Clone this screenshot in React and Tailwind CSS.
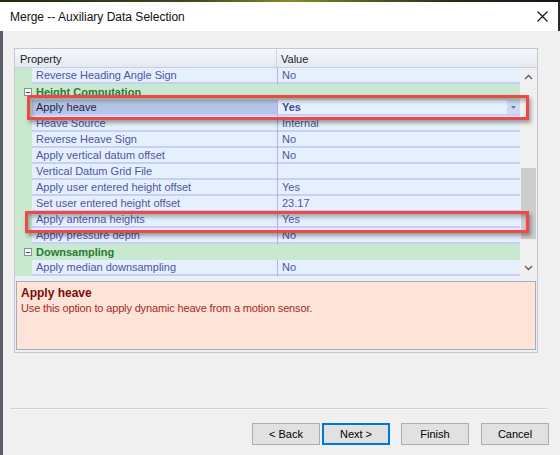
import React from "react";

const rows = [
  { name: "Reverse Heading Angle Sign", value: "No" },
  { cat: "Height Computation" },
  { name: "Apply heave", value: "Yes", selected: true },
  { name: "Heave Source", value: "Internal" },
  { name: "Reverse Heave Sign", value: "No" },
  { name: "Apply vertical datum offset", value: "No" },
  { name: "Vertical Datum Grid File", value: "" },
  { name: "Apply user entered height offset", value: "Yes" },
  { name: "Set user entered height offset", value: "23.17" },
  { name: "Apply antenna heights", value: "Yes" },
  { name: "Apply pressure depth", value: "No" },
  { cat: "Downsampling" },
  { name: "Apply median downsampling", value: "No" },
];

function MinusBox() {
  return (
    <div className="w-[8px] h-[8px] border border-[#8a9098] bg-[#f4f6f8] flex items-center justify-center">
      <div className="w-[4px] h-px bg-[#404850]" />
    </div>
  );
}

function CatRow({ label }) {
  return (
    <div className="flex h-[16px] items-center bg-[#c8e9cf]">
      <div className="w-[21px] flex justify-end pr-[4px] pl-[5px]">
        <MinusBox />
      </div>
      <div className="font-bold text-[#2b7a36] leading-[17px]">{label}</div>
    </div>
  );
}

function PropRow({ name, value, selected }) {
  return (
    <div className="flex h-[16px]">
      <div className="w-[17px] bg-[#c8e9cf]" />
      <div
        className={
          selected
            ? "w-[245px] border-b-2 border-[#c9cdf7] pl-[4px] leading-[15px] bg-[#b5c4e8] text-[#1d1f45]"
            : "w-[245px] border-b-2 border-[#c9cdf7] pl-[4px] leading-[15px] bg-[#e5f0fd] text-[#4e55a6]"
        }
      >
        {name}
      </div>
      <div className="w-px bg-[#aeb3f0]" />
      {selected ? (
        <div className="flex-1 flex border-b-2 border-[#c9cdf7] bg-[#e7f1fd]">
          <div className="flex-1 pl-[4px] leading-[15px] font-bold text-[#3d4aa0]">{value}</div>
          <div className="w-[13px] bg-[#cddaf3] flex items-center justify-center">
            <svg width="5" height="3" viewBox="0 0 5 3">
              <path d="M0 0 H5 L2.5 3 Z" fill="#6a78b0" />
            </svg>
          </div>
        </div>
      ) : (
        <div className="flex-1 border-b-2 border-[#c9cdf7] pl-[4px] leading-[15px] bg-[#e5f0fd] text-[#4e55a6]">
          {value}
        </div>
      )}
    </div>
  );
}

function Btn({ children, primary }) {
  return (
    <div
      className={
        primary
          ? "w-[68px] h-[22px] bg-[#e1e1e1] border-2 border-[#0078d7] flex items-center justify-center text-[11px] text-black"
          : "w-[68px] h-[22px] bg-[#e1e1e1] border border-[#adadad] flex items-center justify-center text-[11px] text-black"
      }
    >
      {children}
    </div>
  );
}

export default function App() {
  return (
    <div className="w-[560px] h-[455px] overflow-hidden relative bg-[#f0f0f0] font-['Liberation_Sans',Arial,sans-serif] text-[11px]">
      <div className="h-[2px] bg-[linear-gradient(90deg,#1e2a14,#3c4c1c_35%,#8c8a24_52%,#5a6a20_62%,#263018_80%,#141414)]" />
      <div className="h-[29px] bg-white flex items-center justify-between pl-[10px] pr-[10px] border-r-2 border-[#2a2a2a]">
        <div className="text-[12px] text-[#111] pt-px">Merge -- Auxiliary Data Selection</div>
        <svg width="11" height="11" viewBox="0 0 11 11">
          <path d="M0.5 0.5 L10.5 10.5 M10.5 0.5 L0.5 10.5" stroke="#111" strokeWidth="1.1" />
        </svg>
      </div>
      <div className="h-[424px] border-l-[3px] border-[#5b6068] flex flex-col">
        <div className="ml-[11px] mt-[17px] w-[524px] h-[305px] border border-[#c4c8d0] bg-[#eceff4] flex flex-col">
          <div className="h-[19px] flex bg-[linear-gradient(180deg,#f6f8fc,#e3e9f2)] border-b border-[#c9d0dc] text-[#1b1b1b]">
            <div className="w-[262px] pl-[5px] leading-[20px] border-r border-[#cfd4de]">Property</div>
            <div className="flex-1 pl-[4px] leading-[20px]">Value</div>
          </div>
          <div className="flex h-[208px]">
            <div className="w-[505px] flex flex-col">
              {rows.map((r, i) =>
                r.cat ? <CatRow key={i} label={r.cat} /> : <PropRow key={i} {...r} />
              )}
            </div>
            <div className="w-[17px] bg-[#f0f0f0] flex flex-col">
              <div className="h-[17px] flex items-center justify-center">
                <svg width="9" height="6" viewBox="0 0 9 6">
                  <path d="M1 5 L4.5 1.5 L8 5" stroke="#606060" strokeWidth="1.4" fill="none" />
                </svg>
              </div>
              <div className="flex-1">
                <div className="mt-[83px] ml-[1px] w-[15px] h-[71px] bg-[#cdcdcd]" />
              </div>
              <div className="h-[17px] flex items-center justify-center">
                <svg width="9" height="6" viewBox="0 0 9 6">
                  <path d="M1 1 L4.5 4.5 L8 1" stroke="#606060" strokeWidth="1.4" fill="none" />
                </svg>
              </div>
            </div>
          </div>
          <div className="mt-[5px] mx-px h-[69px] border border-[#a9adb5] bg-[#fee4d8] px-[4px] pt-[4px]">
            <div className="text-[12px] font-bold text-[#7b0c0c] leading-[15px]">Apply heave</div>
            <div className="text-[#a3282a] leading-[14px] tracking-[-0.15px]">
              Use this option to apply dynamic heave from a motion sensor.
            </div>
          </div>
        </div>
        <div className="mt-[55px] ml-[7px] w-[538px] h-[2px] border-t border-[#d2d2d2] border-b border-b-[#fafafa]" />
        <div className="mt-[13px] flex justify-end pr-[11px]">
          <Btn>&lt; Back</Btn>
          <div className="ml-[2px]">
            <Btn primary>Next &gt;</Btn>
          </div>
          <div className="ml-[11px]">
            <Btn>Finish</Btn>
          </div>
          <div className="ml-[12px]">
            <Btn>Cancel</Btn>
          </div>
        </div>
      </div>
      <div className="absolute left-[27px] top-[95px] w-[502px] h-[25px] border-[3px] border-[#f04848] shadow-[2px_3px_4px_rgba(0,0,0,0.35),inset_2px_3px_4px_rgba(0,0,0,0.3)]" />
      <div className="absolute left-[25px] top-[211px] w-[504px] h-[22px] border-[3px] border-[#f04848] shadow-[2px_3px_4px_rgba(0,0,0,0.35),inset_2px_3px_4px_rgba(0,0,0,0.3)]" />
    </div>
  );
}
